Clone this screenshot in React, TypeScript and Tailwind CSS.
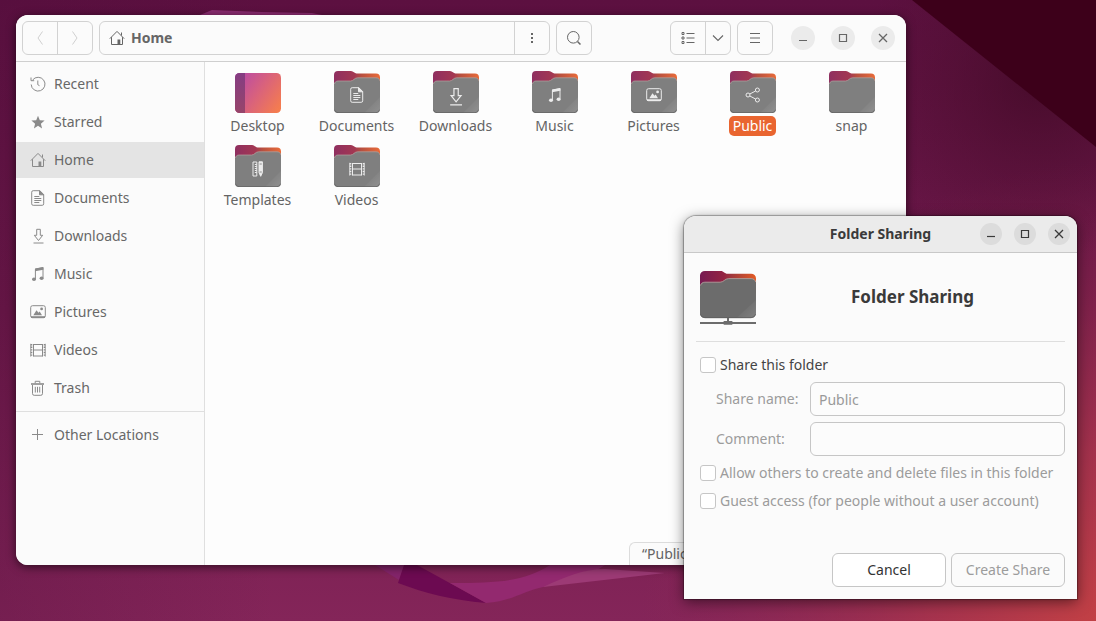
import type { ReactNode } from 'react'

const glyphs: Record<string, ReactNode> = {
  recent: (
    <>
      <path d="M2.6 4A6.9 6.9 0 1 1 1.2 8.5" />
      <path d="M1 1.5v3.2h3.2M7.8 4.5v4.2l1.7 1" />
    </>
  ),
  starred: (
    <path
      d="M8 1.8l1.8 4.5 4.8.3-3.7 3.1 1.2 4.7L8 11.8l-4.1 2.6 1.2-4.7L1.4 6.6l4.8-.3z"
      fill="currentColor"
      stroke="none"
    />
  ),
  home: (
    <>
      <path d="M.8 8.7L8 1.4l7.2 7.3M2.5 7.2v7.3h11V7.2M12.5 5.5V2.5" />
      <path d="M8.5 9.5h2.8v5H8.5z" fill="currentColor" stroke="none" />
    </>
  ),
  documents: (
    <>
      <path d="M3.2.7h6.6l3.9 3.8v9.3a1.5 1.5 0 0 1-1.5 1.5h-9a1.5 1.5 0 0 1-1.5-1.5V2.2A1.5 1.5 0 0 1 3.2.7z" />
      <path d="M9.5.7v4.1h4.2z" fill="currentColor" />
      <path d="M4.3 6.5h5M4.3 8.5h7M4.3 10.5h7M4.3 12.5h5" />
    </>
  ),
  downloads: (
    <>
      <path d="M6.7 1.3h3.6v6h2.4l-4.2 5.2-4.2-5.2h2.4z" />
      <path d="M3.5 15h10" />
    </>
  ),
  music: (
    <>
      <path d="M5.4 13V3.2L13 1.6v10.2" />
      <path d="M5 2.4L13.4.9v2.9L5 5.2z" fill="currentColor" stroke="none" />
      <ellipse cx="4" cy="13.2" rx="2" ry="1.8" fill="currentColor" stroke="none" />
      <ellipse cx="11.6" cy="12.2" rx="2" ry="1.8" fill="currentColor" stroke="none" />
    </>
  ),
  pictures: (
    <>
      <rect x=".7" y="1.7" width="14.6" height="12" rx="1.8" />
      <path d="M1 12.2h14V14H1z" fill="currentColor" stroke="none" />
      <path d="M3.3 11.2l3.2-5 2 2.6 1.2-1.2 2.3 3.6z" fill="currentColor" stroke="none" />
      <circle cx="11.6" cy="4.9" r="1.4" fill="currentColor" stroke="none" />
    </>
  ),
  videos: (
    <>
      <path d="M3.5 2v12.5M12.5 2v12.5M3.5 2.5h9M3.5 8h9M3.5 14h9" />
      <path d="M1.5 2v12.5M14.5 2v12.5" strokeDasharray="1.4 1.2" strokeWidth="1.6" />
      <path d="M.7 1.8v12.8M15.3 1.8v12.8" strokeWidth=".8" />
    </>
  ),
  trash: (
    <>
      <path d="M2.5 5v8.6a1.7 1.7 0 0 0 1.7 1.7h6.6a1.7 1.7 0 0 0 1.7-1.7V5" />
      <path d="M5.2 3.2V1.3h4.6v1.9" />
      <path d="M1 3.2h13v1.6H1z" fill="currentColor" stroke="none" />
      <path d="M5.3 6.8v5.7M7.5 6.8v5.7M9.7 6.8v5.7" />
    </>
  ),
  plus: <path d="M7.5 2v11M2 7.5h11" />,
  share: (
    <>
      <circle cx="3" cy="8" r="2" />
      <circle cx="12.4" cy="3" r="2" />
      <circle cx="12.4" cy="13" r="2" />
      <path d="M4.8 7l5.8-3M4.8 9l5.8 3" />
    </>
  ),
  templates: (
    <>
      <path d="M3 1h3.8v14H3z" />
      <path d="M4.8 3.5h2M4.8 5.500h2M4.8 7.5h2M4.8 9.5h2M4.8 11.5h2" />
      <path d="M9 .8h3.4v10.8L10.7 15.3 9 11.6z" fill="currentColor" />
      <path d="M9.6 3h2.2M9.6 11h2.2" stroke="#777" strokeWidth=".8" />
    </>
  ),
  back: <path d="M10.5 1.5L6 8l4.5 6.5" />,
  forward: <path d="M5.5 1.5L10 8l-4.500 6.5" />,
  dots: <path d="M7 3h2v2H7zM7 7h2v2H7zM7 11h2v2H7z" fill="currentColor" stroke="none" />,
  search: (
    <>
      <circle cx="7.3" cy="7.3" r="5.8" />
      <path d="M11.5 11.5l3 3" strokeWidth="1.5" />
    </>
  ),
  list: (
    <>
      <path d="M2 2.5h2v2H2zM2 7h2v2H2zM2 11.5h2v2H2z" />
      <path d="M6.5 3.5h8M6.5 8h8M6.5 12.5h8" strokeWidth="1.2" />
    </>
  ),
  chevron: <path d="M3 5.5l5 5 5-5" strokeWidth="1.1" />,
  menu: <path d="M3 3.5h10M3 8h10M3 12.5h10" strokeWidth="1.2" />,
  minimize: <path d="M4 10.5h8" strokeWidth="1.2" />,
  maximize: <path d="M4.5 4.5h7v7h-7z" strokeWidth="1.2" />,
  close: <path d="M4 4l8 8M12 4l-8 8" strokeWidth="1.3" />,
}

function Icon({ name, className = 'size-4' }: { name: string; className?: string }) {
  return (
    <svg viewBox="0 0 16 16" className={`shrink-0 ${className}`} fill="none" stroke="currentColor" aria-hidden="true">
      {glyphs[name]}
    </svg>
  )
}

const places = [
  { name: 'Recent', icon: 'recent' },
  { name: 'Starred', icon: 'starred' },
  { name: 'Home', icon: 'home' },
  { name: 'Documents', icon: 'documents' },
  { name: 'Downloads', icon: 'downloads' },
  { name: 'Music', icon: 'music' },
  { name: 'Pictures', icon: 'pictures' },
  { name: 'Videos', icon: 'videos' },
  { name: 'Trash', icon: 'trash' },
]

const files = [
  { name: 'Desktop', icon: 'desktop' },
  { name: 'Documents', icon: 'documents' },
  { name: 'Downloads', icon: 'downloads' },
  { name: 'Music', icon: 'music' },
  { name: 'Pictures', icon: 'pictures' },
  { name: 'Public', icon: 'share', selected: true },
  { name: 'snap', icon: '' },
  { name: 'Templates', icon: 'templates' },
  { name: 'Videos', icon: 'videos' },
]

function Gradients() {
  return (
    <svg className="absolute size-0" aria-hidden="true">
      <defs>
        <linearGradient id="tab" x1="0" x2="1" y1="0" y2="0">
          <stop offset="0" stopColor="#8f2f60" />
          <stop offset=".45" stopColor="#a33852" />
          <stop offset=".6" stopColor="#b8503f" />
          <stop offset="1" stopColor="#e96c3a" />
        </linearGradient>
        <linearGradient id="tab-dark" x1="0" x2="1" y1="0" y2="0">
          <stop offset="0" stopColor="#761a52" />
          <stop offset=".42" stopColor="#932442" />
          <stop offset=".6" stopColor="#a53c3a" />
          <stop offset="1" stopColor="#e35b25" />
        </linearGradient>
        <linearGradient id="shine" x1=".3" x2="1" y1=".3" y2="1">
          <stop offset="0" stopColor="#fff" stopOpacity="0" />
          <stop offset="1" stopColor="#fff" stopOpacity=".14" />
        </linearGradient>
        <linearGradient id="desk" x1="0" x2="1" y1=".2" y2=".8">
          <stop offset="0" stopColor="#b94aa6" />
          <stop offset=".5" stopColor="#d9627c" />
          <stop offset="1" stopColor="#f47c50" />
        </linearGradient>
        <linearGradient id="desk-side" x1="0" x2="0" y1="0" y2="1">
          <stop offset="0" stopColor="#853d83" />
          <stop offset="1" stopColor="#97456a" />
        </linearGradient>
      </defs>
    </svg>
  )
}

function FolderShape({ dark = false }: { dark?: boolean }) {
  return (
    <>
      <path
        d="M0 4a4 4 0 0 1 4-4h13c2.5 0 3.5 2.5 5.5 2.5H42a4 4 0 0 1 4 4V20H0z"
        fill={dark ? 'url(#tab-dark)' : 'url(#tab)'}
      />
      <path
        d="M0 14c0-2.500 1.500-4 4-4h12.5c3 0 4-3.2 7-3.2H42a4 4 0 0 1 4 4V38a4 4 0 0 1-4 4H4a4 4 0 0 1-4-4z"
        fill={dark ? '#6c6c6c' : '#7f7f7f'}
      />
      <path d="M46 26v12a4 4 0 0 1-4 4H30z" fill="url(#shine)" />
      <path
        d="M.5 13c.3-1.8 1.6-3 3.5-3h12.5c3 0 4-3.2 7-3.2H42c2 0 3.5 1.3 3.8 3"
        fill="none"
        stroke="#b5a5a2"
        strokeWidth=".7"
      />
      <path d="M.3 38.5A4 4 0 0 0 4 41.7h38a4 4 0 0 0 3.7-3.2" fill="none" stroke="#5c5c5c" strokeWidth=".7" />
    </>
  )
}

function FileIcon({ icon }: { icon: string }) {
  if (icon === 'desktop') {
    return (
      <svg viewBox="0 0 46 42" className="h-[42px] w-[46px]" aria-hidden="true">
        <rect y="2" width="46" height="40" rx="4.5" fill="url(#desk)" />
        <path d="M10 2H4.5A4.5 4.5 0 0 0 0 6.5v31A4.5 4.5 0 0 0 4.5 42H10z" fill="url(#desk-side)" />
      </svg>
    )
  }
  return (
    <span className="relative">
      <svg viewBox="0 0 46 42" className="h-[42px] w-[46px]" aria-hidden="true">
        <FolderShape />
      </svg>
      {icon && (
        <span className="absolute inset-x-0 top-4 flex justify-center text-[#ececec]">
          <Icon name={icon} className={icon === 'downloads' ? 'size-[19px]' : 'size-4'} />
        </span>
      )}
    </span>
  )
}

function WindowButtons({ size, gap }: { size: string; gap: string }) {
  return (
    <div className={`flex items-center ${gap}`}>
      {['minimize', 'maximize', 'close'].map((name) => (
        <button key={name} type="button" aria-label={name} className={`flex items-center justify-center rounded-full ${size}`}>
          <Icon name={name} />
        </button>
      ))}
    </div>
  )
}

function Wallpaper() {
  return (
    <svg viewBox="0 0 1096 621" preserveAspectRatio="none" className="absolute inset-0 h-full w-full" aria-hidden="true">
      <defs>
        <linearGradient id="sky" x1="0" x2="0" y1="0" y2="1">
          <stop offset="0" stopColor="#5c1040" />
          <stop offset=".5" stopColor="#6b1848" />
          <stop offset="1" stopColor="#842559" />
        </linearGradient>
        <linearGradient id="edge" x1="0" x2="1" y1="0" y2="0">
          <stop offset="0" stopColor="#4a0c38" stopOpacity=".25" />
          <stop offset=".25" stopColor="#4a0c38" stopOpacity="0" />
        </linearGradient>
        <radialGradient id="glow" gradientUnits="userSpaceOnUse" cx="1120" cy="640" r="480">
          <stop offset="0" stopColor="#c84343" />
          <stop offset=".4" stopColor="#b0374a" stopOpacity=".75" />
          <stop offset="1" stopColor="#8f2a50" stopOpacity="0" />
        </radialGradient>
        <radialGradient id="dusk" gradientUnits="userSpaceOnUse" cx="1040" cy="80" r="180">
          <stop offset="0" stopColor="#420a26" stopOpacity=".8" />
          <stop offset="1" stopColor="#4d0f2c" stopOpacity="0" />
        </radialGradient>
      </defs>
      <path d="M0 0h1096v621H0z" fill="url(#sky)" />
      <path d="M0 0h1096v621H0z" fill="url(#edge)" />
      <path d="M0 0h1096v621H0z" fill="url(#glow)" />
      <path d="M0 0h1096v621H0z" fill="url(#dusk)" />
      <path d="M912 0h184v147z" fill="#3d001a" />
      <path d="M200 15l12-5 50 2 50 1 10 2z" fill="#8a2b70" />
      <path d="M375 565h30l-6 15z" fill="#84246a" />
      <path d="M404 565h13l69 38c-34-3-62-10-88-20z" fill="#6c0a51" />
      <path d="M450 583c50 0 75-2 100-18h55c-20 14-50 20-62 22-20 4-30 14-57 16z" fill="#93296f" />
      <path d="M543 587c22-10 40-18 62-18l60 4z" fill="#9c3a75" />
    </svg>
  )
}

const outlined = 'flex h-[34px] items-center justify-center rounded-md border border-[#d2d2d2] text-[#666]'
const tick = 'size-4 shrink-0 appearance-none rounded-[3px] border border-[#c6c6c6] bg-white'
const textBox =
  'h-[34px] min-w-0 flex-1 rounded-md border border-[#c6c6c6] bg-[#fcfcfc] px-2 text-[#999] outline-none'

function FilesWindow() {
  return (
    <section className="absolute top-[15px] right-[190px] bottom-14 left-4 flex flex-col overflow-hidden rounded-xl bg-[#fdfdfd] shadow-[0_2px_10px_rgba(0,0,0,0.6)]">
      <header className="flex items-center gap-1.5 border-b border-[#cfcfcf] bg-[#fbfbfb] py-1.5 pr-[11px] pl-1.5">
        <div className={outlined}>
          <button type="button" disabled aria-label="Back" className="flex h-full w-[34px] items-center justify-center text-[#cfcfcf]">
            <Icon name="back" />
          </button>
          <button type="button" disabled aria-label="Forward" className="flex h-full w-[35px] items-center justify-center border-l border-[#d2d2d2] text-[#cfcfcf]">
            <Icon name="forward" />
          </button>
        </div>
        <div className="flex h-[34px] flex-1 items-center rounded-md border border-[#d2d2d2] text-[#666]">
          <button type="button" className="flex flex-1 items-center gap-1.5 px-[9px] font-bold">
            <Icon name="home" />
            Home
          </button>
          <button type="button" aria-label="Path options" className="flex h-full w-[35px] items-center justify-center border-l border-[#d2d2d2]">
            <Icon name="dots" />
          </button>
        </div>
        <button type="button" aria-label="Search" className={`${outlined} mr-[72px] w-9`}>
          <Icon name="search" />
        </button>
        <div className={outlined}>
          <button type="button" aria-label="List view" className="flex h-full w-[34px] items-center justify-center">
            <Icon name="list" />
          </button>
          <button type="button" aria-label="View options" className="flex h-full w-[25px] items-center justify-center border-l border-[#d2d2d2]">
            <Icon name="chevron" />
          </button>
        </div>
        <button type="button" aria-label="Menu" className={`${outlined} mr-3 w-9`}>
          <Icon name="menu" />
        </button>
        <WindowButtons size="size-6 bg-[#ebebeb] text-[#666]" gap="gap-4" />
      </header>

      <div className="flex min-h-0 flex-1">
        <nav className="w-[189px] shrink-0 border-r border-[#dfdfdf] bg-[#fbfbfb] pt-1 text-[#686868]">
          <ul className="flex flex-col gap-0.5">
            {places.map((p) => (
              <li key={p.name}>
                <a
                  href="#"
                  className={`flex h-9 items-center gap-2 px-3.5 ${p.name === 'Home' ? 'bg-[#e4e4e4]' : ''}`}
                >
                  <Icon name={p.icon} className="size-4 text-[#8a8a8a]" />
                  {p.name}
                </a>
              </li>
            ))}
          </ul>
          <a href="#" className="mt-[5px] flex h-[46px] items-center gap-2 border-t border-[#dfdfdf] px-3.5">
            <Icon name="plus" className="size-4 text-[#8a8a8a]" />
            Other Locations
          </a>
        </nav>

        <main className="relative min-w-0 flex-1">
          <ul className="grid grid-cols-[repeat(auto-fill,99px)] gap-y-[9px] pt-[9px] pl-[3px]">
            {files.map((f) => (
              <li key={f.name}>
                <button type="button" className="flex w-full flex-col items-center gap-[3px]">
                  <FileIcon icon={f.icon} />
                  <span className={`rounded-[5px] px-1 ${f.selected ? 'bg-[#e96530] text-white' : 'text-[#646464]'}`}>
                    {f.name}
                  </span>
                </button>
              </li>
            ))}
          </ul>
          <p className="absolute right-0 bottom-0 w-[277px] truncate rounded-tl-md border-t border-l border-[#dcdcdc] bg-[#fbfbfb] px-3 py-px text-[#646464]">
            “Public” selected
          </p>
        </main>
      </div>
    </section>
  )
}

function SharingDialog() {
  return (
    <section
      role="dialog"
      aria-labelledby="dialog-title"
      className="absolute top-[216px] right-[19px] w-[393px] rounded-t-xl bg-[#fbfbfb] shadow-[0_0_1px_1px_rgba(0,0,0,0.3),0_3px_14px_rgba(0,0,0,0.5)]"
    >
      <header className="grid h-[37px] grid-cols-[1fr_auto_1fr] items-center rounded-t-xl border-b border-[#c8c8c8] bg-[#ebebeb] px-[7px] text-[#3a3a3a]">
        <h1 id="dialog-title" className="col-start-2 font-bold">
          Folder Sharing
        </h1>
        <div className="flex justify-end">
          <WindowButtons size="size-[22px] bg-[#dcdcdc]" gap="gap-3" />
        </div>
      </header>

      <form className="p-3 text-[#9c9c9c]">
        <div className="flex items-center border-b border-[#dedede] pb-3">
          <svg viewBox="0 0 64 64" className="size-16" aria-hidden="true">
            <g transform="translate(4 6) scale(1.217 1.12)">
              <FolderShape dark />
            </g>
            <path d="M4 58h56M32 53v4" stroke="#6c6c6c" strokeWidth="2" />
            <path d="M28 56h8l1.5 2-1.5 1.700h-8l-1.500-1.700z" fill="#6c6c6c" />
          </svg>
          <h2 className="flex-1 text-center text-[17px] font-bold text-[#3a3a3a]">Folder Sharing</h2>
        </div>

        <label className="mt-[9px] flex h-7 items-center gap-1 pl-1 text-[#444]">
          <input type="checkbox" className={tick} />
          Share this folder
        </label>
        <div className="flex flex-col gap-1.5 py-[3px]">
          <div className="flex items-center pl-5">
            <label htmlFor="share-name" className="w-[94px]">
              Share name:
            </label>
            <input id="share-name" defaultValue="Public" disabled className={textBox} />
          </div>
          <div className="flex items-center pl-5">
            <label htmlFor="comment" className="w-[94px]">
              Comment:
            </label>
            <input id="comment" disabled className={textBox} />
          </div>
        </div>
        <label className="flex h-7 items-center gap-1 pl-1">
          <input type="checkbox" disabled className={tick} />
          Allow others to create and delete files in this folder
        </label>
        <label className="flex h-7 items-center gap-1 pl-1">
          <input type="checkbox" disabled className={tick} />
          Guest access (for people without a user account)
        </label>

        <div className="mt-[38px] flex justify-end gap-[5px]">
          <button type="button" className="h-[34px] w-[114px] rounded-md border border-[#c6c6c6] bg-white text-[#333]">
            Cancel
          </button>
          <button type="submit" disabled className="h-[34px] w-[114px] rounded-md border border-[#c6c6c6]">
            Create Share
          </button>
        </div>
      </form>
    </section>
  )
}

export default function App() {
  return (
    <div className="relative h-screen min-h-[600px] overflow-hidden bg-[#6b1848] font-['Noto_Sans',sans-serif] text-[14px] leading-5">
      <Wallpaper />
      <Gradients />
      <FilesWindow />
      <SharingDialog />
    </div>
  )
}
